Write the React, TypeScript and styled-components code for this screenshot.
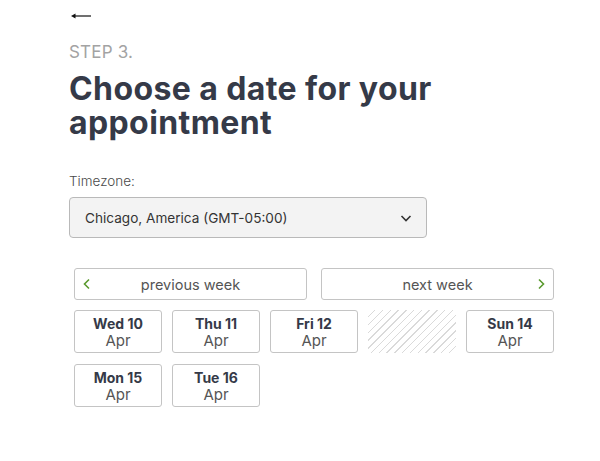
import React from "react";
import styled, { createGlobalStyle } from "styled-components";

const GlobalStyle = createGlobalStyle`
  body {
    margin: 0;
    background: #fff;
    font-family: Inter, "Noto Sans", sans-serif;
    color: #353a48;
  }
`;

const Page = styled.div`
  padding: 8px 0 0 69px;
  width: 600px;
  box-sizing: border-box;
`;

const BackButton = styled.button`
  display: block;
  border: none;
  background: none;
  padding: 0;
  margin-left: 1px;
  height: 16px;
  cursor: pointer;
  svg {
    display: block;
  }
`;

const Step = styled.div`
  margin-top: 18px;
  font-size: 17px;
  color: #a3a3a3;
  letter-spacing: 0.2px;
`;

const Title = styled.h1`
  margin: 10px 0 0;
  font-size: 32px;
  line-height: 34px;
  font-weight: 700;
  letter-spacing: 0.4px;
  color: #353a48;
  width: 400px;
`;

const Label = styled.div`
  margin-top: 33px;
  font-size: 13.5px;
  color: #4a4a4a;
  font-weight: 300;
`;

const Select = styled.div`
  margin-top: 8px;
  width: 358px;
  height: 41px;
  box-sizing: border-box;
  border: 1px solid #b9b9b9;
  border-radius: 4px;
  background: #f3f3f3;
  display: flex;
  align-items: center;
  justify-content: space-between;
  padding: 0 14px 0 15px;
  font-size: 13.6px;
  color: #333;
`;

const Calendar = styled.div`
  margin: 30px 0 0 5px;
  width: 480px;
`;

const NavRow = styled.div`
  display: flex;
  gap: 14px;
`;

const NavButton = styled.button<{ $dir: "prev" | "next" }>`
  flex: 1;
  height: 32px;
  position: relative;
  border: 1px solid #c4c4c4;
  border-radius: 3px;
  background: #fff;
  font-family: inherit;
  font-size: 14.5px;
  color: #555;
  cursor: pointer;
  svg {
    position: absolute;
    top: 50%;
    transform: translateY(-50%);
    ${(p) => (p.$dir === "prev" ? "left: 6px;" : "right: 6px;")}
  }
`;

const Days = styled.div`
  margin-top: 10px;
  display: grid;
  grid-template-columns: repeat(5, 88px);
  gap: 11px 10px;
`;

const DayCard = styled.button`
  height: 43px;
  border: 1px solid #c4c4c4;
  border-radius: 3px;
  background: #fff;
  font-family: inherit;
  display: flex;
  flex-direction: column;
  align-items: center;
  justify-content: center;
  padding: 0;
  cursor: pointer;
`;

const DayName = styled.span`
  font-size: 14px;
  font-weight: 700;
  color: #353a48;
  line-height: 17px;
`;

const Month = styled.span`
  font-size: 15px;
  color: #555;
  line-height: 17px;
`;

const Unavailable = styled.div`
  height: 43px;
  background: repeating-linear-gradient(
    -45deg,
    #fff 0,
    #fff 4.5px,
    #dadada 4.5px,
    #dadada 5.5px
  );
`;

const days = [
  { name: "Wed 10", month: "Apr" },
  { name: "Thu 11", month: "Apr" },
  { name: "Fri 12", month: "Apr" },
  null,
  { name: "Sun 14", month: "Apr" },
  { name: "Mon 15", month: "Apr" },
  { name: "Tue 16", month: "Apr" },
];

const Chevron = ({ d, color }: { d: string; color: string }) => (
  <svg width="12" height="12" viewBox="0 0 12 12">
    <path d={d} fill="none" stroke={color} strokeWidth="1.6" />
  </svg>
);

export default function App() {
  return (
    <>
      <GlobalStyle />
      <Page>
        <BackButton aria-label="back">
          <svg width="22" height="14" viewBox="0 0 22 14">
            <path d="M4 7H21" stroke="#111" strokeWidth="1.2" />
            <path d="M1 7L5.5 4.5V9.5Z" fill="#111" />
          </svg>
        </BackButton>
        <Step>STEP 3.</Step>
        <Title>Choose a date for your appointment</Title>
        <Label>Timezone:</Label>
        <Select>
          <span>Chicago, America (GMT-05:00)</span>
          <Chevron d="M1.5 4L6 8.5L10.5 4" color="#333" />
        </Select>
        <Calendar>
          <NavRow>
            <NavButton $dir="prev">
              <Chevron d="M8 1.5L3.5 6L8 10.5" color="#5a9a2e" />
              previous week
            </NavButton>
            <NavButton $dir="next">
              next week
              <Chevron d="M4 1.5L8.5 6L4 10.5" color="#5a9a2e" />
            </NavButton>
          </NavRow>
          <Days>
            {days.map((d, i) =>
              d ? (
                <DayCard key={i}>
                  <DayName>{d.name}</DayName>
                  <Month>{d.month}</Month>
                </DayCard>
              ) : (
                <Unavailable key={i} />
              )
            )}
          </Days>
        </Calendar>
      </Page>
    </>
  );
}
